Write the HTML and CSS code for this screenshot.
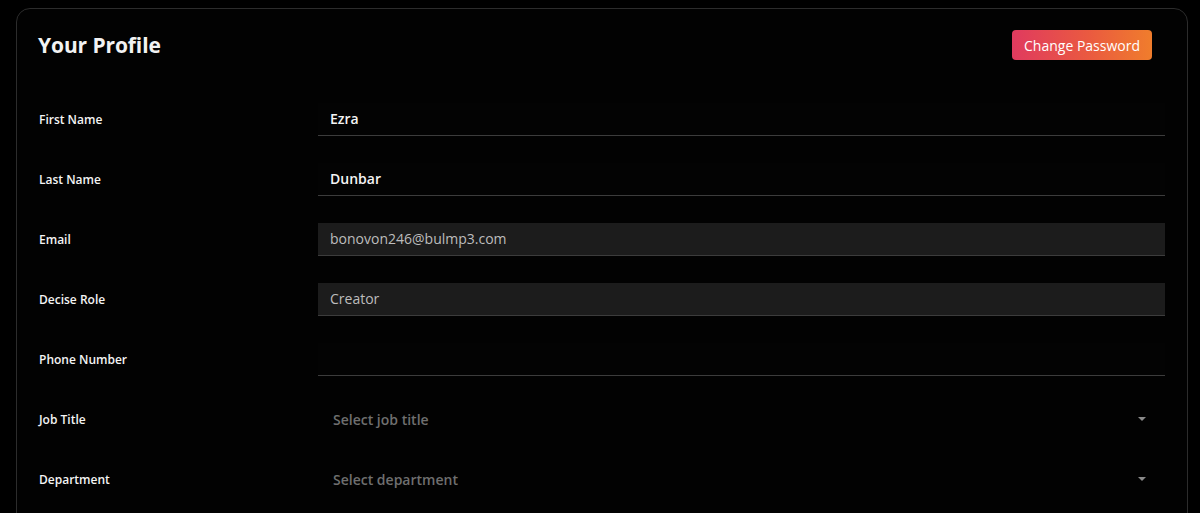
FILE: index.html
```html
<!DOCTYPE html>
<html lang="en">
<head>
  <meta charset="UTF-8" />
  <meta name="viewport" content="width=device-width, initial-scale=1" />
  <title>Your Profile</title>
  <link rel="stylesheet" href="styles.css">
</head>
<body>
  <div class="card">
    <div class="card-header">
      <h2>Your Profile</h2>
      <button class="btn-gradient">Change Password</button>
    </div>

    <form class="profile-form">
      <div class="form-row">
        <label for="firstName">First Name</label>
        <input type="text" id="firstName" value="Ezra" />
      </div>
      <div class="form-row">
        <label for="lastName">Last Name</label>
        <input type="text" id="lastName" value="Dunbar" />
      </div>
      <div class="form-row">
        <label for="email">Email</label>
        <input type="text" id="email" class="readonly" value="bonovon246@bulmp3.com" readonly />
      </div>
      <div class="form-row">
        <label for="role">Decise Role</label>
        <input type="text" id="role" class="readonly" value="Creator" readonly />
      </div>
      <div class="form-row">
        <label for="phone">Phone Number</label>
        <input type="text" id="phone" value="" />
      </div>
      <div class="form-row">
        <label>Job Title</label>
        <div class="select">
          <span>Select job title</span>
          <span class="caret"></span>
        </div>
      </div>
      <div class="form-row">
        <label>Department</label>
        <div class="select">
          <span>Select department</span>
          <span class="caret"></span>
        </div>
      </div>
    </form>
  </div>
</body>
</html>
```

FILE: styles.css
```css
body {
  font-family: "Open Sans", Arial, sans-serif;
  background-color: #000;
  margin: 0;
  padding: 0;
  color: #fff;
  overflow: hidden;
}

.card {
  margin: 8px 12px 0 16px;
  background: #020202;
  border: 1px solid #2c2c2c;
  border-radius: 14px;
  padding: 21px 22px 30px 21px;
}

.card-header {
  display: flex;
  align-items: center;
  justify-content: space-between;
  height: 30px;
  padding-right: 13px;
}

.card-header h2 {
  margin: 0;
  font-size: 21px;
  font-weight: 700;
  letter-spacing: -0.1px;
  color: #f2f2f2;
}

.btn-gradient {
  height: 30px;
  padding: 0 12px;
  border: none;
  border-radius: 4px;
  background: linear-gradient(90deg, #e03a5f 0%, #ea5a40 55%, #f07d2c 100%);
  color: #fff;
  font-family: inherit;
  font-size: 14px;
  cursor: pointer;
}

.profile-form {
  margin-top: 29px;
}

.form-row {
  display: grid;
  grid-template-columns: 280px 1fr;
  align-items: center;
  height: 60px;
}

.form-row label {
  padding-left: 1px;
  font-size: 12px;
  font-weight: 600;
  color: #f4f4f4;
}

.form-row input {
  box-sizing: border-box;
  width: 100%;
  height: 33px;
  padding: 0 12px;
  background: #030303;
  border: none;
  border-bottom: 1px solid #3c3c3c;
  color: #f4f4f4;
  font-family: inherit;
  font-size: 14px;
  font-weight: 600;
  outline: none;
}

.form-row input.readonly {
  background: #1c1c1c;
  color: #bdbdbd;
  font-weight: 500;
}

.select {
  display: flex;
  align-items: center;
  justify-content: space-between;
  height: 33px;
  padding: 0 19px 0 15px;
  color: #6f6f6f;
  font-size: 14px;
  font-weight: 600;
}

.caret {
  width: 0;
  height: 0;
  border-left: 4px solid transparent;
  border-right: 4px solid transparent;
  border-top: 4px solid #8a8a8a;
}
```
